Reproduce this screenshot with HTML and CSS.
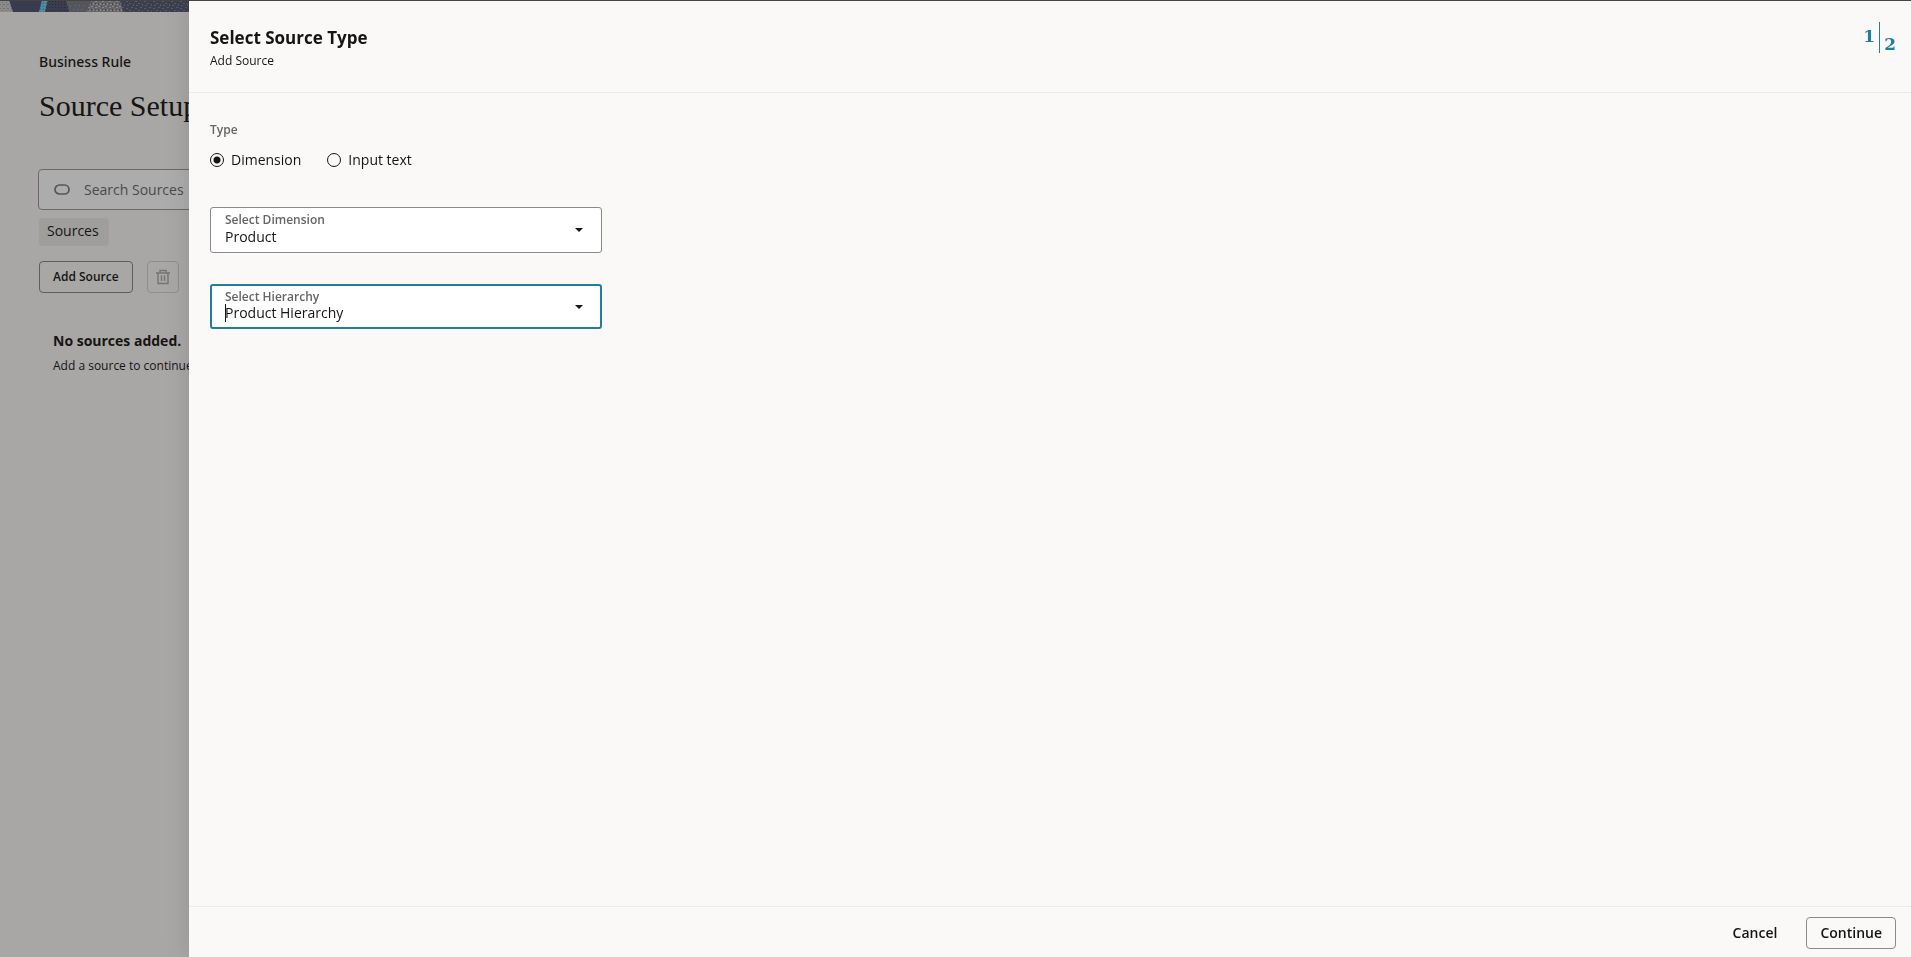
FILE: index.html
```html
<!DOCTYPE html>
<html lang="en">
<head>
<meta charset="utf-8">
<meta name="viewport" content="width=device-width, initial-scale=1">
<title>Source Setup</title>
<link rel="stylesheet" href="styles.css">
</head>
<body>
<main class="page">
  <svg class="banner" width="189" height="12" viewBox="0 0 189 12" aria-hidden="true">
    <defs>
      <pattern id="grain-light" width="4" height="4" patternUnits="userSpaceOnUse">
        <rect width="4" height="4" fill="#8d8c8c"/><path d="M0 0h1v1H0zM2 2h1v1H2zM3 0h1v1H3z" fill="#6e6e72"/>
      </pattern>
      <pattern id="grain-mid" width="7" height="6" patternUnits="userSpaceOnUse">
        <rect width="7" height="6" fill="#66656a"/><path d="M0 0h2v1H0zM4 1h2v1H4zM2 3h1v2H2zM5 4h2v1H5z" fill="#8b8986"/><path d="M3 0h1v1H3zM0 3h1v2H0zM4 3h1v1H4z" fill="#484852"/>
      </pattern>
      <pattern id="grain-dark" width="9" height="7" patternUnits="userSpaceOnUse">
        <rect width="9" height="7" fill="#3c3f50"/><path d="M0 1h2v1H0zM5 0h2v1H5zM3 3h2v1H3zM7 4h1v2H7zM1 5h2v1H1z" fill="#5d5b5f"/>
      </pattern>
      <pattern id="dots-dark" width="3" height="3" patternUnits="userSpaceOnUse">
        <rect width="3" height="3" fill="#3a3d4f"/><path d="M1 1h1v1H1z" fill="#2a2b38"/>
      </pattern>
      <pattern id="dots-blue" width="3" height="3" patternUnits="userSpaceOnUse">
        <rect width="3" height="3" fill="#5f8b98"/><path d="M0 0h2v1H0zM1 2h1v1H1z" fill="#1f7f9c"/>
      </pattern>
    </defs>
    <rect width="189" height="12" fill="url(#grain-dark)"/>
    <rect width="13" height="12" fill="url(#grain-light)"/>
    <path d="M9 0h34l-4 12H13z" fill="#393c4f"/>
    <path d="M42 0h6l-3 12h-6z" fill="url(#dots-blue)"/>
    <path d="M48 0h18l3 12H45z" fill="url(#dots-dark)"/>
    <path d="M66 0h26l-6 12H69z" fill="#57545a"/>
    <path d="M70 6h1v1h-1zM75 5h1v1h-1zM79 5h1v1h-1zM83 5h1v1h-1zM73 9h1v1h-1zM77 9h1v1h-1zM81 9h1v1h-1z" fill="#1f8aa8"/>
    <path d="M92 0h28l3 12H86z" fill="url(#grain-mid)"/>
    <rect width="189" height="1" fill="#444"/>
  </svg>
  <div class="content">
    <p class="crumb">Business Rule</p>
    <h1 class="title">Source Setup</h1>
    <label class="search">
      <svg width="18" height="12" viewBox="0 0 18 12" aria-hidden="true"><rect x="2" y="1" width="14" height="9" rx="4.500" fill="none" stroke="#55555b" stroke-width="1.700"/></svg>
      <input class="search-input" type="text" placeholder="Search Sources" aria-label="Search Sources">
    </label>
    <span class="chip">Sources</span>
    <div class="toolbar">
      <button class="btn btn-add" type="button">Add Source</button>
      <button class="btn btn-delete" type="button" aria-label="Delete" disabled>
        <svg width="16" height="16" viewBox="0 0 16 16" fill="none" stroke="#737478" aria-hidden="true"><path d="M1 4h14M5 3.500V1.500h6v2M3 4v10.500h10V4M6.500 6.500v5.500M9.500 6.500v5.500" stroke-width="1.400"/></svg>
      </button>
    </div>
    <section class="empty">
      <h2 class="empty-title">No sources added.</h2>
      <p class="empty-text">Add a source to continue.</p>
    </section>
  </div>
</main>
<form class="drawer">
  <header class="drawer-head">
    <div>
      <h2 class="drawer-title">Select Source Type</h2>
      <p class="drawer-sub">Add Source</p>
    </div>
    <div class="steps"><span class="step-now">1</span><span class="step-line"></span><span class="step-total">2</span></div>
  </header>
  <div class="drawer-body">
    <fieldset class="type">
      <legend class="type-label">Type</legend>
      <div class="radios">
        <label class="radio"><input type="radio" name="type" checked>Dimension</label>
        <label class="radio"><input type="radio" name="type">Input text</label>
      </div>
    </fieldset>
    <div class="field">
      <label class="field-label" for="dimension">Select Dimension</label>
      <select class="field-select" id="dimension"><option>Product</option></select>
      <svg class="arrow" width="8" height="4" viewBox="0 0 8 4" aria-hidden="true"><path d="M0 0h8L4 4z" fill="#161513"/></svg>
    </div>
    <div class="field field-active">
      <label class="field-label" for="hierarchy">Select Hierarchy</label>
      <select class="field-select" id="hierarchy"><option>Product Hierarchy</option></select>
      <svg class="arrow" width="8" height="4" viewBox="0 0 8 4" aria-hidden="true"><path d="M0 0h8L4 4z" fill="#161513"/></svg>
      <span class="caret"></span>
    </div>
  </div>
  <footer class="drawer-foot">
    <button class="btn btn-cancel" type="button">Cancel</button>
    <button class="btn btn-continue" type="button">Continue</button>
  </footer>
</form>
</body>
</html>
```
FILE: styles.css
```css
* {
  box-sizing: border-box;
}

body {
  margin: 0;
  background: #a8a7a5;
  color: #161513;
  font-family: "Open Sans", "Noto Sans", sans-serif;
  font-size: 14px;
  line-height: 20px;
}

h1,
h2,
p {
  margin: 0;
}

button,
input,
select {
  font: inherit;
  color: inherit;
}

.page {
  min-height: 100vh;
  overflow: hidden;
}

.banner {
  display: block;
}

.content {
  padding: 40px 39px;
}

.crumb {
  font-family: "Noto Sans", sans-serif;
  font-weight: 500;
}

.title {
  margin-top: 16px;
  font-family: Georgia, "Liberation Serif", serif;
  font-size: 30px;
  font-weight: 400;
  line-height: 36px;
}

.search {
  display: flex;
  align-items: center;
  gap: 13px;
  height: 41px;
  margin: 45px 0 0 -1px;
  padding: 0 14px;
  border: 1px solid #6b6a69;
  border-radius: 4px;
  background: #acacac;
}

.search-input {
  flex: 1;
  min-width: 0;
  padding: 0;
  border: 0;
  outline: 0;
  background: transparent;
}

.search-input::placeholder {
  color: #4b4a49;
  opacity: 1;
}

.chip {
  display: table;
  margin-top: 8px;
  padding: 3px 10px 5px 8px;
  border-radius: 4px;
  background: #9f9e9c;
}

.toolbar {
  display: flex;
  gap: 14px;
  margin-top: 15px;
}

.btn {
  height: 32px;
  padding: 0 13px;
  border: 1px solid #8b8a88;
  border-radius: 4px;
  background: transparent;
  font-weight: 600;
}

.btn-add {
  border-color: #5f5e5d;
  font-size: 12px;
}

.btn-delete {
  display: flex;
  align-items: center;
  justify-content: center;
  width: 32px;
  padding: 0;
  border-color: #8f8e8d;
}

.empty {
  margin: 38px 14px;
  white-space: nowrap;
}

.empty-title {
  font-size: 14px;
  font-weight: 700;
}

.empty-text {
  margin-top: 5px;
  font-size: 12px;
}

.drawer {
  position: fixed;
  inset: 1px 0 0 189px;
  display: flex;
  flex-direction: column;
  background: #fbf9f8;
  box-shadow: 0 0 24px rgba(0, 0, 0, 0.12);
}

.drawer::before {
  content: "";
  position: absolute;
  inset: -1px 0 auto 0;
  height: 1px;
  background: #444;
}

.drawer-head {
  display: flex;
  justify-content: space-between;
  height: 92px;
  padding: 21px 15px 0 21px;
  border-bottom: 1px solid #eeecea;
}

.drawer-title {
  font-size: 17px;
  font-weight: 700;
  line-height: 31px;
}

.drawer-sub {
  font-size: 12px;
  line-height: 16px;
}

.steps {
  display: flex;
  gap: 4px;
  height: 31px;
  color: #227e9e;
  font-family: "DejaVu Serif", serif;
  font-size: 17px;
  font-weight: 700;
  line-height: 20px;
}

.step-now {
  padding-top: 4px;
}

.step-line {
  width: 1px;
  background: #227e9e;
}

.step-total {
  padding-top: 12px;
}

.drawer-body {
  flex: 1;
  padding: 27px 21px;
}

.type {
  margin: 0;
  padding: 0;
  border: 0;
}

.type-label {
  padding: 0;
  color: #676563;
  font-size: 12px;
  font-weight: 600;
  line-height: 20px;
}

.radios {
  display: flex;
  gap: 26px;
  margin-top: 10px;
}

.radio {
  display: flex;
  align-items: center;
  gap: 7px;
}

.radio input {
  appearance: none;
  width: 14px;
  height: 14px;
  margin: 0;
  border: 1px solid #161513;
  border-radius: 50%;
}

.radio input:checked {
  background: radial-gradient(circle, #161513 3px, transparent 4px);
}

.field {
  position: relative;
  width: 392px;
  max-width: 100%;
  height: 46px;
  margin-top: 37px;
}

.field + .field {
  height: 45px;
  margin-top: 31px;
}

.field-label {
  position: absolute;
  top: 4px;
  left: 15px;
  color: #676563;
  font-size: 12px;
  font-weight: 600;
  line-height: 18px;
}

.field-select {
  appearance: none;
  width: 100%;
  height: 100%;
  padding: 14px 32px 0 14px;
  border: 1px solid #8b8a88;
  border-radius: 3px;
  outline: 0;
  background: #fff;
}

.field-active .field-select {
  padding: 13px 32px 0 13px;
  border: 2px solid #227e9e;
}

.arrow {
  position: absolute;
  top: 21px;
  right: 19px;
}

.caret {
  position: absolute;
  top: 20px;
  left: 15px;
  width: 1px;
  height: 18px;
  background: #161513;
}

.drawer-foot {
  display: flex;
  justify-content: flex-end;
  gap: 15px;
  height: 51px;
  padding: 10px 15px 0;
  border-top: 1px solid #eeecea;
}

.btn-cancel {
  border-color: transparent;
}
```
